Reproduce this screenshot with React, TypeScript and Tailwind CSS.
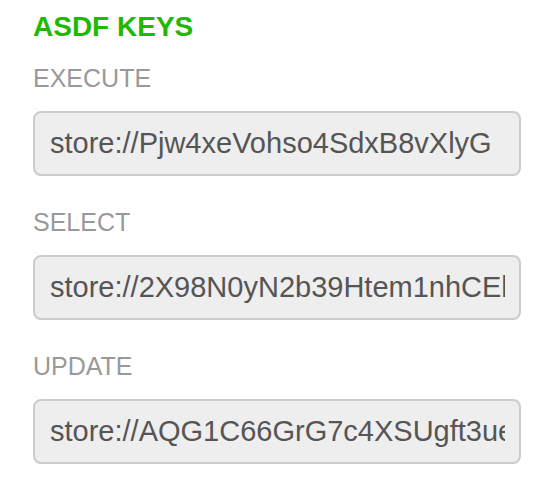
const keys = [
  { label: 'EXECUTE', value: 'store://Pjw4xeVohso4SdxB8vXlyG' },
  { label: 'SELECT', value: 'store://2X98N0yN2b39Htem1nhCElqP3' },
  { label: 'UPDATE', value: 'store://AQG1C66GrG7c4XSUgft3ue0Zk' },
];

export default function App() {
  return (
    <div className="min-h-screen bg-white pl-[33px] pr-[35px] pt-[11px] font-['Liberation_Sans',Arial,sans-serif]">
      <h1 className="text-[28px] leading-[32px] font-bold text-[#22b800]">ASDF KEYS</h1>

      <div className="mt-[20px] flex flex-col gap-[31px]">
        {keys.map((k) => (
          <div key={k.label} className="flex flex-col">
            <label className="text-[25px] leading-[30px] text-[#999999] mb-[18px]">{k.label}</label>
            <input
              readOnly
              value={k.value}
              className="h-[65px] w-full rounded-[8px] border-2 border-[#cccccc] bg-[#eeeeee] pl-[15px] pr-[14px] text-[29px] text-[#555555] outline-none font-['Liberation_Sans',Arial,sans-serif]"
            />
          </div>
        ))}
      </div>
    </div>
  );
}
